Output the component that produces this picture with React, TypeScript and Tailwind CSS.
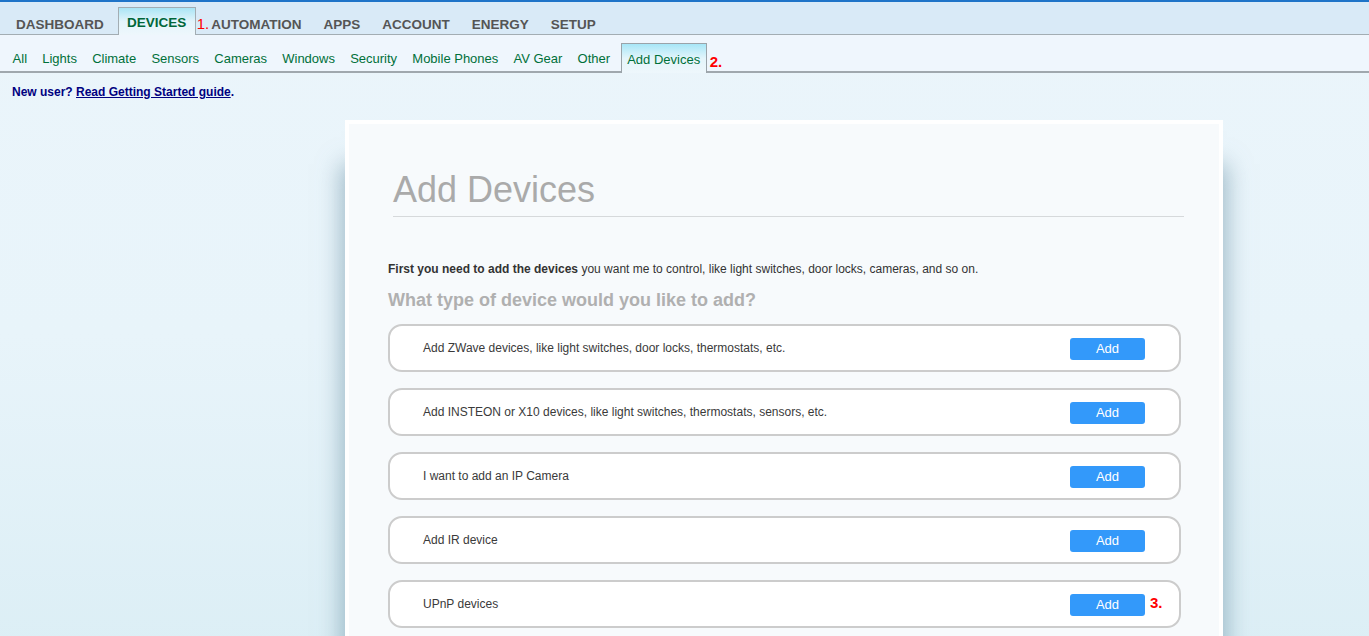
const mainTabs = ["DASHBOARD", "DEVICES", "AUTOMATION", "APPS", "ACCOUNT", "ENERGY", "SETUP"];
const subTabs = ["All", "Lights", "Climate", "Sensors", "Cameras", "Windows", "Security", "Mobile Phones", "AV Gear", "Other"];

const deviceRows = [
  "Add ZWave devices, like light switches, door locks, thermostats, etc.",
  "Add INSTEON or X10 devices, like light switches, thermostats, sensors, etc.",
  "I want to add an IP Camera",
  "Add IR device",
  "UPnP devices",
];

function TopNav() {
  return (
    <div className="border-t-2 border-[#1f74c8] bg-[#d9eaf7]">
      <div className="flex h-[33px] items-end border-b border-[#a3adb3] pl-[16px]">
        {mainTabs.map((tab) =>
          tab === "DEVICES" ? (
            <div key={tab} className="flex items-end">
              <div className="-mb-px ml-[14px] flex h-[28px] w-[78px] items-start justify-center border border-b-0 border-[#a3adb3] bg-gradient-to-b from-[#a9e5f5] via-[#e3f4fb] to-[#eef7fc] pt-[5px] text-[13.5px] font-bold text-[#00663a]">
                {tab}
              </div>
              <span className="mb-[3px] ml-px text-[15px] leading-none text-[#ff0000]">1.</span>
            </div>
          ) : (
            <div
              key={tab}
              className={
                "mb-[3px] text-[13.5px] font-bold leading-none text-[#555] " +
                (tab === "DASHBOARD" ? "" : tab === "AUTOMATION" ? "ml-[2px]" : "ml-[22px]")
              }
            >
              {tab}
            </div>
          )
        )}
      </div>
    </div>
  );
}

function SubNav() {
  return (
    <div className="flex h-[38px] items-end border-b-2 border-[#a0a8ae] bg-[#eff6fd] pl-[5px]">
      {subTabs.map((tab) => (
        <div key={tab} className="mb-[6px] px-[7.6px] text-[13px] leading-none text-[#00703a]">
          {tab}
        </div>
      ))}
      <div className="-mb-[2px] ml-[3px] flex h-[30px] w-[86px] items-start justify-center border border-b-0 border-[#9aa3a9] bg-gradient-to-b from-[#a6e6f7] via-[#e4f5fb] to-[#eef7fc] pt-[9px] text-[13px] leading-none text-[#00703a]">
        Add Devices
      </div>
      <span className="mb-[2px] ml-[3px] text-[15px] font-bold leading-none text-[#ff0000]">2.</span>
    </div>
  );
}

function DeviceRow({ label, mark }: { label: string; mark?: string }) {
  return (
    <div className="flex h-[48px] items-center justify-between rounded-[14px] border-2 border-[#cccccc] bg-white pl-[33px] pr-[34px]">
      <span className="text-[12px] text-[#3a3a3a]">{label}</span>
      <div className="relative">
        <button className="h-[22px] w-[75px] rounded-[3px] bg-[#3399fa] text-[13px] text-white">Add</button>
        {mark && (
          <span className="absolute left-full top-[3px] ml-[5px] text-[15px] font-bold leading-none text-[#ff0000]">
            {mark}
          </span>
        )}
      </div>
    </div>
  );
}

export default function App() {
  return (
    <div className="min-h-[636px] bg-gradient-to-b from-[#ebf5fb] via-[#e8f4fa] to-[#dbeef5] font-['Liberation_Sans',Arial,sans-serif]">
      <TopNav />
      <SubNav />
      <div className="px-[12px] pt-[10px] text-[12px] font-bold text-[#000080]">
        New user? <span className="underline">Read Getting Started guide</span>.
      </div>

      <div className="mt-[19px] pl-[345px]">
        <div className="relative w-[878px]">
          <div className="absolute inset-x-[2px] bottom-0 top-[50px] shadow-[0_0_22px_6px_rgba(100,140,160,0.55)]" />
          <div className="relative border-4 border-white bg-[#f7fafc] pb-[40px] pl-[39px] pr-[35px] pt-[46px]">
            <h1 className="ml-[5px] border-b border-[#d6d9db] pb-[6px] text-[36px] leading-[40px] text-[#aaaaaa]">
              Add Devices
            </h1>
            <p className="mt-[43px] text-[12px] text-[#333]">
              <b>First you need to add the devices</b> you want me to control, like light switches, door locks, cameras,
              and so on.
            </p>
            <h2 className="mt-[9px] text-[18px] font-bold text-[#b0b0b0]">What type of device would you like to add?</h2>
            <div className="mr-[3px] mt-[10px] flex flex-col gap-[16px]">
              {deviceRows.map((row, i) => (
                <DeviceRow key={row} label={row} mark={i === deviceRows.length - 1 ? "3." : undefined} />
              ))}
            </div>
          </div>
        </div>
      </div>
    </div>
  );
}
